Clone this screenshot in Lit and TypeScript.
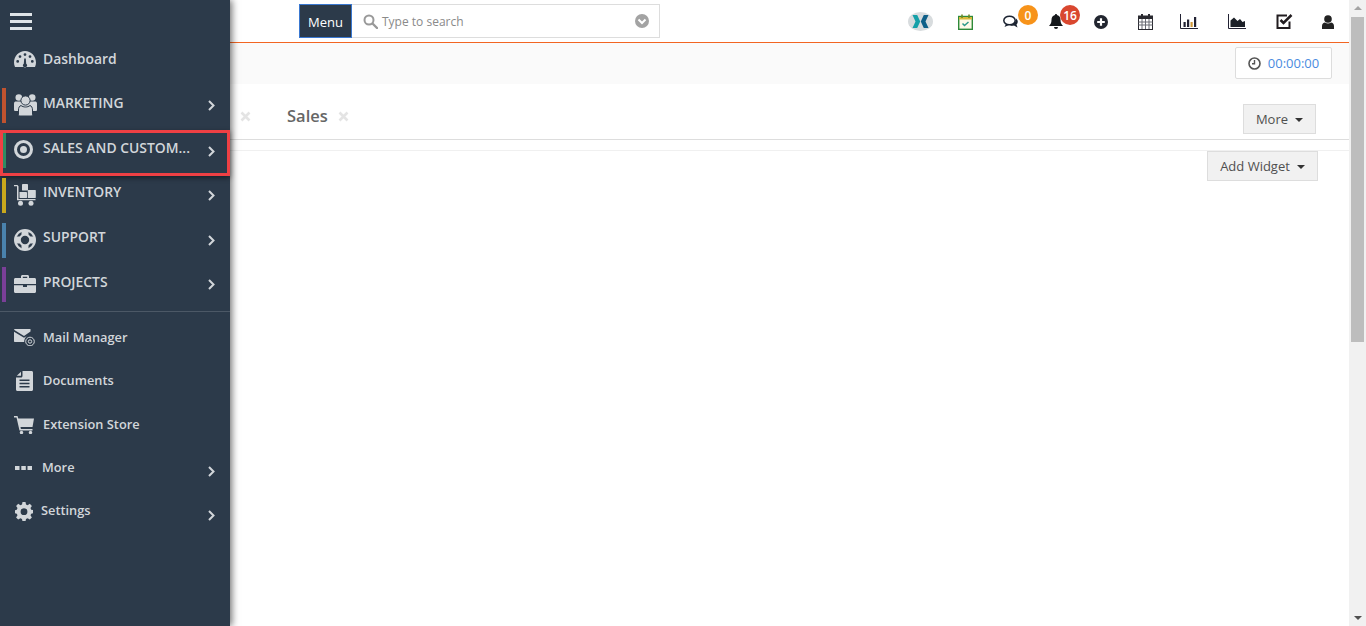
import { LitElement, html, css, svg } from "lit";
import { customElement } from "lit/decorators.js";

const I = {
  gauge: svg`<path fill-rule="evenodd" d="M11 1C5 1 0 6 0 12.500c0 1.600.3 3 1 4.500h20c.7-1.500 1-2.900 1-4.500C22 6 17 1 11 1zM11 3.200a1.400 1.400 0 1 1 0 2.800 1.400 1.400 0 0 1 0-2.800zM6 5.200A1.400 1.400 0 1 1 6 8a1.400 1.400 0 0 1 0-2.800zM16 5.200a1.400 1.400 0 1 1 0 2.800 1.400 1.400 0 0 1 0-2.800zM3.700 10a1.400 1.400 0 1 1 0 2.800 1.400 1.400 0 0 1 0-2.800zM18.300 10a1.400 1.400 0 1 1 0 2.800 1.400 1.400 0 0 1 0-2.800zM10.200 8.500h1.600l.4 5.200a2 2 0 1 1-2.400 0z"/>`,
  users: svg`<circle cx="4.800" cy="3.500" r="3.300"/><circle cx="18.200" cy="3.500" r="3.300"/><path d="M0 9.500C0 8 1 7.500 2 7.500h19c1 0 2 .5 2 2v6c0 1-.5 1.500-1.500 1.500h-20C.5 17 0 16.500 0 15.500z"/><circle cx="11.500" cy="6.500" r="4.600" stroke="#2c3a4a" stroke-width="1"/><path d="M4.500 16c0-2.500 1-4 2.500-4.500 1.200 1 2.800 1.500 4.500 1.500s3.300-.5 4.500-1.500c1.500.5 2.500 2 2.500 4.500v4.500c0 1-.6 1.500-1.500 1.500H6c-.9 0-1.500-.5-1.500-1.500z" stroke="#2c3a4a" stroke-width="1"/>`,
  target: svg`<path fill-rule="evenodd" d="M9.500 0a9.500 9.500 0 1 1 0 19 9.500 9.500 0 0 1 0-19zM9.500 3a6.500 6.500 0 1 0 0 13 6.500 6.500 0 0 0 0-13zM9.500 6a3.500 3.500 0 1 1 0 7 3.500 3.500 0 0 1 0-7z"/>`,
  dolly: svg`<path d="M0 1h3.500l1 1.200V15h17v1.300H3V2.300H0z"/><rect x="5.500" y="8" width="7.500" height="6" rx=".4"/><rect x="13.800" y="6" width="8" height="8" rx=".4"/><rect x="8" y="0" width="6" height="6.500" rx=".4"/><circle cx="6.500" cy="19.300" r="2.500"/><circle cx="17" cy="19.300" r="2.500"/>`,
  ring: svg`<g fill="none" stroke="currentColor" stroke-width="2.200"><circle cx="11" cy="11" r="9.900"/><circle cx="11" cy="11" r="5.300"/></g><path d="M7.500 1h7v5h-7zM7.500 16h7v5h-7zM1 7.500h5v7H1zM16 7.500h5v7h-5z"/>`,
  case: svg`<path fill-rule="evenodd" d="M7 3V1.500C7 .6 7.600 0 8.500 0h5c.9 0 1.500.6 1.500 1.500V3h5.500C21.400 3 22 3.600 22 4.500V9H0V4.500C0 3.600.6 3 1.500 3zM8.800 1.800V3h4.400V1.800z"/><path d="M0 10.200h9V12h4v-1.800h9v6.300c0 .9-.6 1.500-1.500 1.500h-19C.6 18 0 17.400 0 16.500z"/>`,
  mail: svg`<path d="M0 .8l10 6.200 6.500-4.500V0H1C.4 0 0 .3 0 .8zM0 2.800V12c0 .6.4 1 1 1h9.200c-.2-2.500 1-5 3.300-6.500L10 8.800z"/><circle cx="16" cy="12.500" r="4.300" fill="none" stroke="currentColor" stroke-width="1"/><circle cx="16" cy="12.500" r="1.700" fill="none" stroke="currentColor" stroke-width="1"/>`,
  doc: svg`<path fill-rule="evenodd" d="M6.500 0h9C16.400 0 17 .6 17 1.500v17c0 .9-.6 1.500-1.500 1.500h-14C.6 20 0 19.400 0 18.500v-12h5c.9 0 1.500-.6 1.500-1.500zM3.500 8.500v1.500h10V8.500zM3.500 11.700v1.500h10v-1.500zM3.500 15v1.500h10V15z"/><path d="M5 .8v4H.8z"/>`,
  cart: svg`<path d="M0 0h3.500l.8 2.500H20l-1.500 8.500H6.500l.4 2h11.600v1.500H5.500L2.500 1.500H0z"/><circle cx="7.500" cy="16.500" r="1.700"/><circle cx="16.500" cy="16.500" r="1.700"/>`,
  dots: svg`<rect x="0" y="0" width="4.500" height="4"/><rect x="6.300" y="0" width="4.500" height="4"/><rect x="12.500" y="0" width="4.500" height="4"/>`,
  gear: svg`<path fill-rule="evenodd" d="M7.500 0h3l.5 2.500 1.600.7 2.200-1.400 2.100 2.100-1.400 2.200.7 1.600 2.300.5v3l-2.300.5-.7 1.600 1.400 2.200-2.100 2.100-2.200-1.400-1.600.7-.5 2.500h-3L7 16.900l-1.600-.7-2.200 1.400-2.100-2.100 1.400-2.200-.7-1.600L0 11.200v-3l1.800-.5.700-1.600-1.400-2.200 2.100-2.100 2.200 1.400L7 2.500zM9 6.300a3.400 3.400 0 1 0 0 6.800 3.400 3.400 0 0 0 0-6.800z"/>`,
};

const groups = [
  { label: "MARKETING", icon: I.users, w: 23, h: 22, accent: "#c0532f" },
  { label: "SALES AND CUSTOM...", icon: I.target, w: 19, h: 19, accent: "#2e8b62", sel: true },
  { label: "INVENTORY", icon: I.dolly, w: 22, h: 22, accent: "#c9a81c" },
  { label: "SUPPORT", icon: I.ring, w: 22, h: 22, accent: "#4a82ad" },
  { label: "PROJECTS", icon: I.case, w: 22, h: 18, accent: "#7a3f98" },
];
const tools = [
  { label: "Mail Manager", icon: I.mail, w: 21, h: 17 },
  { label: "Documents", icon: I.doc, w: 17, h: 20 },
  { label: "Extension Store", icon: I.cart, w: 20, h: 18 },
  { label: "More", icon: I.dots, w: 17, h: 4, more: true },
  { label: "Settings", icon: I.gear, w: 18, h: 19, more: true, tight: true },
];

const chevron = html`<svg class="chev" viewBox="0 0 7 11" width="7" height="11"><path d="M1 1l4.500 4.500L1 10" fill="none" stroke="currentColor" stroke-width="2"/></svg>`;

@customElement("app-root")
export class AppRoot extends LitElement {
  static styles = css`
    :host { display: block; width: 1366px; height: 626px; position: relative; overflow: hidden; background: #fff; font-family: "Open Sans", sans-serif; color: #555; }
    .page { display: flex; height: 626px; }
    .main { flex: 1; min-width: 0; display: flex; flex-direction: column; }
    .top { flex: none; box-sizing: border-box; padding: 4px 0 4px 299px; display: flex; align-items: stretch; border-bottom: 1px solid #f26522; height: 43px; }
    .menu { width: 53px; height: 34px; box-sizing: border-box; background: #2c3a4a; border: 1px solid #3a78d0; color: #fff; font-size: 13px; font-weight: 500; display: flex; align-items: center; justify-content: center; padding-top: 1px; }
    .search { width: 308px; height: 34px; box-sizing: border-box; border: 1px solid #ddd; border-left: none; display: flex; align-items: center; padding: 0 10px 0 11px; gap: 4px; font-size: 12px; color: #8a8a8a; }
    .search span { flex: 1; }
    .icons { margin-left: auto; display: grid; grid-template-columns: 44px 46px 46px 44px 46px 42px 46px 50px 44px 43px; height: 34px; }
    .cell { display: flex; align-items: center; justify-content: center; position: relative; color: #222; padding-top: 1px; }
    .badge { position: absolute; top: 1px; width: 20px; height: 20px; border-radius: 50%; color: #fff; font-size: 12px; font-weight: 600; display: flex; align-items: center; justify-content: center; }
    .badge.o { background: #f7931a; left: 30px; }
    .badge.r { background: #d9472f; left: 26px; }
    .sub { height: 41px; flex: none; background: #fafafa; display: flex; justify-content: flex-end; align-items: flex-start; padding: 4px 17px 0 0; box-sizing: border-box; }
    .timer { width: 97px; height: 32px; box-sizing: border-box; background: #fff; border: 1px solid #ddd; border-radius: 2px; display: flex; align-items: center; justify-content: center; gap: 7px; color: #4a8be0; font-size: 13px; }
    .tabs { height: 56px; flex: none; box-sizing: border-box; border-bottom: 1px solid #ddd; display: flex; align-items: flex-start; padding: 20px 33px 0 240px; }
    .x { width: 11px; height: 11px; margin-top: 7px; color: #e4e4e4; flex: none; }
    .tab { margin-left: 36px; font-size: 16.500px; font-weight: 600; color: #666; line-height: 24px; }
    .tab + .x { margin-left: 10px; }
    .btn { height: 30px; box-sizing: border-box; background: #f1f1f1; border: 1px solid #ddd; color: #4f4f4f; font-size: 13px; display: flex; align-items: center; justify-content: center; gap: 7px; }
    .more { width: 73px; margin-left: auto; }
    .caret { width: 0; height: 0; border: 4px solid transparent; border-top-color: #333; border-bottom: 0; margin-top: 2px; }
    .widgets { flex: 1; display: flex; justify-content: flex-end; padding: 0 31px 0 0; margin-top: 10px; border-top: 1px solid #f0f0f0; }
    .add { width: 111px; }
    .bar { width: 17px; flex: none; background: #f1f1f1; display: flex; flex-direction: column; align-items: center; position: relative; }
    .thumb { width: 13px; height: 325px; background: #bdbdbd; margin-top: 17px; }
    .up, .down { width: 0; height: 0; border: 4px solid transparent; position: absolute; }
    .up { top: 6px; border-bottom: 4px solid #a3a3a3; border-top: 0; }
    .down { bottom: 6px; border-top: 4px solid #505050; border-bottom: 0; }
    .side { position: absolute; left: 0; top: 0; bottom: 0; width: 230px; background: #2c3a4a; box-shadow: 2px 0 7px rgba(0,0,0,.55); color: #d2d6da; font-size: 13.900px; font-weight: 600; }
    .burger { height: 37px; box-sizing: border-box; padding: 13px 0 0 10px; display: flex; flex-direction: column; gap: 4px; }
    .burger i { display: block; width: 22px; height: 3px; background: #dfe4e8; }
    .row { display: flex; align-items: center; position: relative; box-sizing: border-box; }
    .dash { height: 44px; }
    .dash .lbl { margin-top: -2px; }
    .ico { width: 43px; flex: none; display: flex; align-items: center; padding-left: 14px; box-sizing: border-box; }
    .ico svg { fill: #d2d6da; color: #d2d6da; display: block; }
    .row .lbl { flex: 1; white-space: nowrap; }
    .chev { color: #d2d6da; margin-right: 15px; margin-top: 0; }
    .groups { padding-top: 7px; display: flex; flex-direction: column; }
    .g { height: 35px; margin-bottom: 9.850px; }
    .g .lbl { margin-top: -7px; }
    .g .ico { margin-top: -1px; }
    .g::before { content: ""; position: absolute; left: 2px; top: 0; bottom: 0; width: 4px; background: var(--accent); }
    .g.sel::before { left: 3px; width: 3px; z-index: 1; }
    .g.sel::after { content: ""; position: absolute; left: 0; right: 0; top: -3px; bottom: -8px; border: 3px solid #ef4044; box-shadow: 0 2px 5px rgba(0,0,0,.45); box-sizing: border-box; }
    .g.sel .lbl { margin-top: -5px; }
    .g.sel .chev { margin-top: 2px; }
    hr { border: 0; height: 1px; background: #4c5866; margin: -1.500px 0 0; }
    .tools { margin-top: 3.600px; display: flex; flex-direction: column; font-size: 12.800px; }
    .t { height: 43.700px; }
    .t .lbl { margin-top: -1px; }
    .t.m .lbl { margin-top: -3px; margin-left: -1px; }
    .t.m.tight .lbl { margin-left: -2px; }
    .t.m .chev { margin-top: 7px; }
    .t.m .ico { padding-left: 15px; }
    .t .ico.c17 { padding-left: 16px; }
  `;

  render() {
    return html`
      <div class="page">
        <div class="main">
          <div class="top">
            <div class="menu">Menu</div>
            <div class="search">
              <svg width="15" height="15" viewBox="0 0 15 15"><circle cx="6" cy="6" r="4.500" fill="none" stroke="#999" stroke-width="2"/><path d="M9.500 9.500L14 14" stroke="#999" stroke-width="2.400" stroke-linecap="round"/></svg>
              <span>Type to search</span>
              <svg width="14" height="14" viewBox="0 0 14 14"><circle cx="7" cy="7" r="7" fill="#a3a3a3"/><path d="M3.500 5.500L7 9l3.500-3.500" fill="none" stroke="#fff" stroke-width="2"/></svg>
            </div>
            <div class="icons">
              <div class="cell"><svg width="25" height="19" viewBox="0 0 25 19"><ellipse cx="12.500" cy="9.500" rx="12.500" ry="9.500" fill="#d8dcde"/><path d="M4.500 3h4.700l3 6.500-3 6.500H4.500l3-6.500z" fill="#15a0a8"/><path d="M20.500 3h-4.700l-3 6.500 3 6.500h4.700l-3-6.500z" fill="#0e5f88"/></svg></div>
              <div class="cell"><svg width="15" height="16" viewBox="0 0 15 16"><rect x=".7" y="2.500" width="13.600" height="12.800" fill="#fffbe8" stroke="#2f8a3a" stroke-width="1.400"/><rect x="1" y="3" width="13" height="2.500" fill="#d9b93a"/><path d="M4 .5v3.500M11 .5v3.500" stroke="#6b8a2a" stroke-width="1.600"/><path d="M4.500 9.500l2 2 4-3.500" fill="none" stroke="#2f9a8a" stroke-width="1.500"/></svg></div>
              <div class="cell"><svg width="16" height="14" viewBox="0 0 16 14"><ellipse cx="6.500" cy="5.500" rx="5.700" ry="4.300" fill="#fff" stroke="#1a2230" stroke-width="1.500"/><path d="M3 9l-1.500 3L6 10z" fill="#1a2230"/><path d="M13 3.500c2 1.500 2.500 4 .5 6l1 3-3.500-2c-1.500.3-3 .3-4-.3 3-.2 6-2.500 6-6.700z" fill="#1a2230"/></svg><span class="badge o">0</span></div>
              <div class="cell"><svg width="14" height="16" viewBox="0 0 14 16"><path d="M7 0c.7 0 1 .4 1 1 2.500.5 3.500 2.500 3.500 5 0 3 1 4.500 2.500 6H0c1.500-1.500 2.500-3 2.500-6 0-2.500 1-4.500 3.500-5 0-.6.300-1 1-1zM5 13h4a2 2 0 0 1-4 0z" fill="#15181c"/></svg><span class="badge r">16</span></div>
              <div class="cell"><svg width="14" height="14" viewBox="0 0 14 14"><circle cx="7" cy="7" r="7" fill="#222630"/><path d="M7 3.200v7.600M3.200 7h7.600" stroke="#fff" stroke-width="2.200"/></svg></div>
              <div class="cell"><svg width="15" height="16" viewBox="0 0 15 16"><rect x=".5" y="2" width="14" height="13.500" fill="#fff" stroke="#2a2a30"/><path d="M.5 8h14M.5 11h14M4 5v10M7.500 5v10M11 5v10" stroke="#6a6c74"/><rect x="0" y="2" width="15" height="3" fill="#2a2a30"/><path d="M4 0v3M11 0v3" stroke="#2a2a30" stroke-width="2"/></svg></div>
              <div class="cell"><svg width="18" height="15" viewBox="0 0 18 15"><path d="M.5 0v14.500H18" fill="none" stroke="#223" stroke-width="1"/><path d="M3.500 8h2.200v5H3.500zM7 5.500h2.200V13H7z" fill="#223"/><path d="M10.500 8h2.200v5h-2.200z" fill="#d29a3a"/><path d="M14 3h2.200v10H14z" fill="#223"/></svg></div>
              <div class="cell"><svg width="18" height="15" viewBox="0 0 18 15"><path d="M.5 0v14.500H18" fill="none" stroke="#223"/><path d="M2.500 13V6.500L6 3.500 9.500 7l2.500-2 2.500 3 2.500-1v6z" fill="#1c2028"/></svg></div>
              <div class="cell"><svg width="17" height="17" viewBox="0 0 17 17"><path d="M13.500 8.500V15H1.500V2.500H11" fill="none" stroke="#221d20" stroke-width="2"/><path d="M4.500 7l3 3L15.500 2" fill="none" stroke="#221d20" stroke-width="2.500"/></svg></div>
              <div class="cell"><svg width="12" height="14" viewBox="0 0 12 14"><circle cx="6" cy="4" r="3.800" fill="#222"/><path d="M0 14v-3c0-2 1.500-3.500 3-3.500 1 .7 2 1 3 1s2-.3 3-1c1.500 0 3 1.500 3 3.500v3z" fill="#222"/></svg></div>
            </div>
          </div>
          <div class="sub">
            <div class="timer">
              <svg width="13" height="13" viewBox="0 0 13 13"><circle cx="6.500" cy="6.500" r="5.500" fill="none" stroke="#555" stroke-width="1.600"/><path d="M6.500 3v3.800H4" fill="none" stroke="#555" stroke-width="1.400"/></svg>
              <span>00:00:00</span>
            </div>
          </div>
          <div class="tabs">
            <svg class="x" viewBox="0 0 11 11"><path d="M1.500 1.500l8 8M9.500 1.500l-8 8" stroke="currentColor" stroke-width="2.600"/></svg>
            <span class="tab">Sales</span>
            <svg class="x" viewBox="0 0 11 11"><path d="M1.500 1.500l8 8M9.500 1.500l-8 8" stroke="currentColor" stroke-width="2.600"/></svg>
            <div class="btn more">More <i class="caret"></i></div>
          </div>
          <div class="widgets"><div class="btn add">Add Widget <i class="caret"></i></div></div>
        </div>
        <div class="bar"><i class="up"></i><div class="thumb"></div><i class="down"></i></div>
      </div>
      <nav class="side">
        <div class="burger"><i></i><i></i><i></i></div>
        <div class="row dash">
          <div class="ico"><svg width="22" height="18" viewBox="0 0 22 18">${I.gauge}</svg></div>
          <span class="lbl">Dashboard</span>
        </div>
        <div class="groups">
          ${groups.map(
            (g) => html`<div class="row g ${g.sel ? "sel" : ""}" style="--accent:${g.accent}">
              <div class="ico"><svg width=${g.w} height=${g.h} viewBox="0 0 ${g.w} ${g.h}">${g.icon}</svg></div>
              <span class="lbl">${g.label}</span>${chevron}
            </div>`
          )}
        </div>
        <hr />
        <div class="tools">
          ${tools.map(
            (t) => html`<div class="row t ${t.more ? "m" : ""} ${t.tight ? "tight" : ""}">
              <div class="ico ${t.w === 17 && !t.more ? "c17" : ""}"><svg width=${t.w} height=${t.h} viewBox="0 0 ${t.w} ${t.h}">${t.icon}</svg></div>
              <span class="lbl">${t.label}</span>${t.more ? chevron : ""}
            </div>`
          )}
        </div>
      </nav>
    `;
  }
}
